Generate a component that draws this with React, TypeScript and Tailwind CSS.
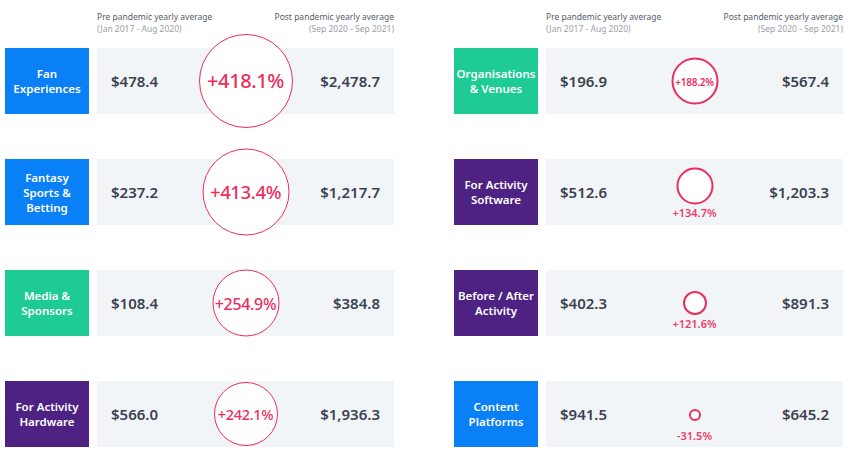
import React from "react";

type Row = {
  label: string[];
  color: string;
  pre: string;
  post: string;
  change: string;
  size: number;
  inside: boolean;
  fontSize?: number;
  dy?: number;
  labelGap?: number;
};

const leftRows: Row[] = [
  { label: ["Fan", "Experiences"], color: "bg-[#0a80f6]", pre: "$478.4", post: "$2,478.7", change: "+418.1%", size: 94, inside: true, fontSize: 20 },
  { label: ["Fantasy", "Sports &", "Betting"], color: "bg-[#0a80f6]", pre: "$237.2", post: "$1,217.7", change: "+413.4%", size: 87, inside: true, fontSize: 18.5 },
  { label: ["Media &", "Sponsors"], color: "bg-[#1fcb94]", pre: "$108.4", post: "$384.8", change: "+254.9%", size: 67, inside: true, fontSize: 16 },
  { label: ["For Activity", "Hardware"], color: "bg-[#4e2283]", pre: "$566.0", post: "$1,936.3", change: "+242.1%", size: 64, inside: true, fontSize: 14.5 },
];

const rightRows: Row[] = [
  { label: ["Organisations", "& Venues"], color: "bg-[#1fcb94]", pre: "$196.9", post: "$567.4", change: "+188.2%", size: 47, inside: true, fontSize: 10 },
  { label: ["For Activity", "Software"], color: "bg-[#4e2283]", pre: "$512.6", post: "$1,203.3", change: "+134.7%", size: 37, inside: false, dy: -6, labelGap: 4 },
  { label: ["Before / After", "Activity"], color: "bg-[#4e2283]", pre: "$402.3", post: "$891.3", change: "+121.6%", size: 24, inside: false, dy: 0, labelGap: 5 },
  { label: ["Content", "Platforms"], color: "bg-[#0a80f6]", pre: "$941.5", post: "$645.2", change: "-31.5%", size: 12, inside: false, dy: 1, labelGap: 11 },
];

function ChangeCircle({ row }: { row: Row }) {
  const ring = row.size < 20 ? 2.5 : row.size < 50 ? 2 : 1.5;
  return (
    <div
      className="absolute left-1/2 top-1/2"
      style={{ transform: `translate(-50%, calc(-50% + ${row.dy ?? 0}px))` }}
    >
      <div
        className="relative flex items-center justify-center rounded-full border-[#ec2d5c] bg-white"
        style={{ width: row.size, height: row.size, borderWidth: ring }}
      >
        {row.inside && (
          <span
            className={`leading-none text-[#ec2d5c] tracking-[-0.02em] ${row.size < 50 ? "font-semibold" : "font-medium"}`}
            style={{ fontSize: row.fontSize }}
          >
            {row.change}
          </span>
        )}
        {!row.inside && (
          <span
            className="absolute left-1/2 top-full -translate-x-1/2 whitespace-nowrap text-[11px] font-semibold leading-[12px] text-[#ec3d67]"
            style={{ marginTop: row.labelGap }}
          >
            {row.change}
          </span>
        )}
      </div>
    </div>
  );
}

function Column({ rows }: { rows: Row[] }) {
  return (
    <div className="flex w-[389px] flex-col">
      <div className="ml-[92px] flex h-[48px] justify-between pt-[11px] text-[8.5px] leading-[12px]">
        <div>
          <div className="text-[#555d68]">Pre pandemic yearly average</div>
          <div className="text-[#9aa0a8]">(Jan 2017 - Aug 2020)</div>
        </div>
        <div className="text-right">
          <div className="text-[#555d68]">Post pandemic yearly average</div>
          <div className="text-[#9aa0a8]">(Sep 2020 - Sep 2021)</div>
        </div>
      </div>
      <div className="flex flex-col gap-[45px]">
        {rows.map((row) => (
          <div key={row.pre} className="flex h-[66px] gap-[8px]">
            <div
              className={`flex w-[84px] flex-col items-center justify-center text-center text-[11.5px] font-semibold leading-[15px] text-white ${row.color}`}
            >
              {row.label.map((l) => (
                <span key={l} className="block h-[15px]">{l}</span>
              ))}
            </div>
            <div className="relative flex flex-1 items-center justify-between bg-[#f2f5f8] px-[14px] text-[15px] font-semibold text-[#3a4250]">
              <span>{row.pre}</span>
              <ChangeCircle row={row} />
              <span>{row.post}</span>
            </div>
          </div>
        ))}
      </div>
    </div>
  );
}

export default function App() {
  return (
    <div
      className="flex h-[458px] w-[856px] gap-[60px] bg-white pl-[5px]"
      style={{ fontFamily: '"Noto Sans", "Open Sans", sans-serif' }}
    >
      <Column rows={leftRows} />
      <Column rows={rightRows} />
    </div>
  );
}
